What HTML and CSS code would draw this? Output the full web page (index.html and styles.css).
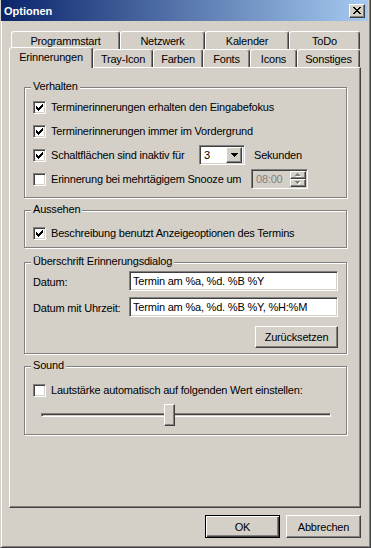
FILE: index.html
```html
<!doctype html>
<html lang="de">
<head>
  <meta charset="UTF-8">
  <title>Optionen</title>
  <link rel="stylesheet" href="styles.css">
</head>
<body>
  <div class="window">
    <div class="titlebar">
      <span class="title">Optionen</span>
      <span class="close-btn">
        <svg width="8" height="7" viewBox="0 0 8 7" shape-rendering="crispEdges">
          <path d="M0 0h2v1H0zM6 0h2v1H6zM1 1h2v1H1zM5 1h2v1H5zM2 2h4v1H2zM3 3h2v1H3zM2 4h4v1H2zM1 5h2v1H1zM5 5h2v1H5zM0 6h2v1H0zM6 6h2v1H6z"/>
        </svg>
      </span>
    </div>

    <div class="content">
      <div class="tabs">
        <div class="tab-row back">
          <div class="tab tab-programmstart">Programmstart</div>
          <div class="tab tab-netzwerk">Netzwerk</div>
          <div class="tab tab-kalender">Kalender</div>
          <div class="tab tab-todo">ToDo</div>
        </div>
        <div class="tab-row front">
          <div class="tab tab-erinnerungen active">Erinnerungen</div>
          <div class="tab tab-tray">Tray-Icon</div>
          <div class="tab tab-farben">Farben</div>
          <div class="tab tab-fonts">Fonts</div>
          <div class="tab tab-icons">Icons</div>
          <div class="tab tab-sonstiges">Sonstiges</div>
        </div>
      </div>

      <div class="panel">
        <div class="group group-verhalten">
          <span class="group-title">Verhalten</span>
          <div class="row">
            <span class="checkbox checked">
              <svg width="7" height="7" viewBox="0 0 7 7" shape-rendering="crispEdges"><path d="M0 2h1v3H0zM1 3h1v3H1zM2 4h1v3H2zM3 3h1v3H3zM4 2h1v3H4zM5 1h1v3H5zM6 0h1v3H6z"/></svg>
            </span>
            <span>Terminerinnerungen erhalten den Eingabefokus</span>
          </div>
          <div class="row">
            <span class="checkbox checked">
              <svg width="7" height="7" viewBox="0 0 7 7" shape-rendering="crispEdges"><path d="M0 2h1v3H0zM1 3h1v3H1zM2 4h1v3H2zM3 3h1v3H3zM4 2h1v3H4zM5 1h1v3H5zM6 0h1v3H6z"/></svg>
            </span>
            <span>Terminerinnerungen immer im Vordergrund</span>
          </div>
          <div class="row">
            <span class="checkbox checked">
              <svg width="7" height="7" viewBox="0 0 7 7" shape-rendering="crispEdges"><path d="M0 2h1v3H0zM1 3h1v3H1zM2 4h1v3H2zM3 3h1v3H3zM4 2h1v3H4zM5 1h1v3H5zM6 0h1v3H6z"/></svg>
            </span>
            <span class="label-combo">Schaltflächen sind inaktiv für</span>
            <span class="combo">
              <span class="combo-text">3</span>
              <span class="combo-btn">
                <svg width="7" height="4" viewBox="0 0 7 4" shape-rendering="crispEdges"><path d="M0 0h7v1H0zM1 1h5v1H1zM2 2h3v1H2zM3 3h1v1H3z"/></svg>
              </span>
            </span>
            <span class="unit">Sekunden</span>
          </div>
          <div class="row">
            <span class="checkbox"></span>
            <span class="label-spin">Erinnerung bei mehrtägigem Snooze um</span>
            <span class="spin disabled">
              <span class="spin-text">08:00</span>
              <span class="spin-btns">
                <span class="spin-btn">
                  <svg width="6" height="4" viewBox="0 0 6 4" shape-rendering="crispEdges"><path class="hl" d="M3 1h1v1H3zM2 2h3v1H2zM1 3h5v1H1z"/><path d="M2 0h1v1H2zM1 1h3v1H1zM0 2h5v1H0z"/></svg>
                </span>
                <span class="spin-btn">
                  <svg width="6" height="4" viewBox="0 0 6 4" shape-rendering="crispEdges"><path class="hl" d="M1 1h5v1H1zM2 2h3v1H2zM3 3h1v1H3z"/><path d="M0 0h5v1H0zM1 1h3v1H1zM2 2h1v1H2z"/></svg>
                </span>
              </span>
            </span>
          </div>
        </div>

        <div class="group group-aussehen">
          <span class="group-title">Aussehen</span>
          <div class="row">
            <span class="checkbox checked">
              <svg width="7" height="7" viewBox="0 0 7 7" shape-rendering="crispEdges"><path d="M0 2h1v3H0zM1 3h1v3H1zM2 4h1v3H2zM3 3h1v3H3zM4 2h1v3H4zM5 1h1v3H5zM6 0h1v3H6z"/></svg>
            </span>
            <span>Beschreibung benutzt Anzeigeoptionen des Termins</span>
          </div>
        </div>

        <div class="group group-ueberschrift">
          <span class="group-title">Überschrift Erinnerungsdialog</span>
          <div class="field">
            <span class="field-label">Datum:</span>
            <span class="edit">Termin am %a, %d. %B %Y</span>
          </div>
          <div class="field">
            <span class="field-label">Datum mit Uhrzeit:</span>
            <span class="edit">Termin am %a, %d. %B %Y, %H:%M</span>
          </div>
          <div class="field-actions">
            <span class="button btn-reset">Zurücksetzen</span>
          </div>
        </div>

        <div class="group group-sound">
          <span class="group-title">Sound</span>
          <div class="row">
            <span class="checkbox"></span>
            <span>Lautstärke automatisch auf folgenden Wert einstellen:</span>
          </div>
          <div class="slider">
            <span class="slider-track"></span>
            <span class="slider-thumb" style="--value: 0.44"></span>
          </div>
        </div>
      </div>

      <div class="buttons">
        <span class="button default">OK</span>
        <span class="button">Abbrechen</span>
      </div>
    </div>
  </div>
</body>
</html>
```

FILE: styles.css
```css
* {
    box-sizing: border-box;
}
body {
    margin: 0;
    background: #d4d0c8;
    font-family: "Liberation Sans", Arial, sans-serif;
    font-size: 11px;
    letter-spacing: -0.2px;
    color: #000;
}
.window {
    width: 371px;
    height: 548px;
    background: #d4d0c8;
    border-right: 1px solid #404040;
    border-bottom: 1px solid #404040;
    border-left: 1px solid #d4d0c8;
    box-shadow: inset 1px 0 #fff, inset -1px -1px #808080;
    display: flex;
    flex-direction: column;
}

/* title bar */
.titlebar {
    height: 21px;
    margin-right: 2px;
    padding: 0 3px 0 3px;
    background: linear-gradient(to right, #0a246a, #a6caf0);
    display: flex;
    align-items: center;
}
.title {
    flex: 1;
    color: #fff;
    font-weight: bold;
    font-size: 11px;
    letter-spacing: 0;
    padding-top: 1px;
}
.close-btn {
    width: 16px;
    height: 14px;
    background: #d4d0c8;
    border: 1px solid;
    border-color: #fff #404040 #404040 #fff;
    box-shadow: inset -1px -1px #808080;
    display: flex;
    align-items: center;
    justify-content: center;
    padding-bottom: 1px;
}

.content {
    padding: 10px 9px 0 8px;
}

/* tabs */
.tab-row {
    display: flex;
    height: 18px;
}
.tab-row.back {
    margin-left: 2px;
}
.tab {
    height: 18px;
    border: 1px solid;
    border-bottom: 0;
    border-color: #fff #404040 #fff #fff;
    border-radius: 3px 3px 0 0;
    box-shadow: inset -1px 0 #808080;
    background: #d4d0c8;
    text-align: center;
    line-height: 13px;
    padding-top: 3px;
}
.tab.active {
    position: relative;
    z-index: 1;
    height: 21px;
    margin-top: -2px;
    padding-top: 3px;
}
.tab-programmstart { width: 109px; }
.tab-netzwerk { width: 85px; }
.tab-kalender { width: 84px; }
.tab-todo { width: 71px; }
.tab-erinnerungen { width: 84px; }
.tab-tray { width: 60px; }
.tab-farben { width: 50px; }
.tab-fonts { width: 47px; }
.tab-icons { width: 47px; }
.tab-sonstiges { width: 63px; }

.panel {
    height: 441px;
    border: 1px solid;
    border-color: #fff #404040 #404040 #fff;
    box-shadow: inset -1px -1px #808080;
    padding: 0 13px 0 14px;
}

/* group boxes */
.group {
    position: relative;
    border: 1px solid #808080;
    box-shadow: inset 1px 1px #fff, 1px 1px #fff;
    padding: 0 8px;
}
.group-title {
    position: absolute;
    top: -8px;
    left: 6px;
    padding: 0 2px;
    line-height: 13px;
    background: #d4d0c8;
}
.group-verhalten {
    margin-top: 19px;
    padding-top: 7px;
    padding-bottom: 6px;
}
.group-aussehen {
    margin-top: 12px;
    padding-top: 10px;
    padding-bottom: 2px;
}
.group-ueberschrift {
    margin-top: 14px;
    padding-top: 8px;
    padding-bottom: 5px;
}
.group-sound {
    margin-top: 12px;
    padding-top: 11px;
    padding-bottom: 8px;
}

.row {
    display: flex;
    align-items: center;
    height: 24px;
}
.checkbox {
    width: 13px;
    height: 13px;
    margin-right: 5px;
    flex: none;
    background: #fff;
    border: 1px solid;
    border-color: #808080 #fff #fff #808080;
    box-shadow: inset 1px 1px #404040, inset -1px -1px #d4d0c8;
    padding: 2px;
    display: flex;
}
.checkbox svg {
    display: block;
}

.label-combo {
    width: 148px;
}
.combo {
    width: 46px;
    height: 20px;
    background: #fff;
    border: 1px solid;
    border-color: #808080 #fff #fff #808080;
    box-shadow: inset 1px 1px #404040, inset -1px -1px #d4d0c8;
    padding: 2px;
    display: flex;
    align-items: center;
}
.combo-text {
    flex: 1;
    padding-left: 2px;
}
.combo-btn {
    width: 16px;
    height: 16px;
    background: #d4d0c8;
    border: 1px solid;
    border-color: #fff #404040 #404040 #fff;
    box-shadow: inset -1px -1px #808080;
    display: flex;
    align-items: center;
    justify-content: center;
}
.unit {
    margin-left: 9px;
}

.label-spin {
    width: 200px;
}
.spin {
    width: 57px;
    height: 20px;
    border: 1px solid;
    border-color: #808080 #fff #fff #808080;
    box-shadow: inset 1px 1px #404040, inset -1px -1px #d4d0c8;
    padding: 2px 1px 2px 2px;
    display: flex;
    align-items: center;
}
.spin-text {
    flex: 1;
    color: #808080;
    padding-left: 2px;
}
.spin-btns {
    display: flex;
    flex-direction: column;
    width: 16px;
    height: 16px;
}
.spin-btn {
    flex: 1;
    border: 1px solid;
    border-color: #fff #404040 #404040 #fff;
    box-shadow: inset -1px -1px #808080;
    display: flex;
    align-items: center;
    justify-content: center;
}
.spin-btn svg path {
    fill: #808080;
}
.spin-btn svg path.hl {
    fill: #fff;
}

/* text fields */
.field {
    display: flex;
    align-items: center;
    height: 20px;
    margin-bottom: 6px;
}
.field-label {
    width: 96px;
    padding-top: 2px;
}
.edit {
    width: 209px;
    height: 20px;
    background: #fff;
    border: 1px solid;
    border-color: #808080 #fff #fff #808080;
    box-shadow: inset 1px 1px #404040, inset -1px -1px #d4d0c8;
    padding: 3px 3px 0;
    line-height: 13px;
    white-space: nowrap;
}
.field-actions {
    display: flex;
    justify-content: flex-end;
    margin-top: 9px;
}

/* buttons */
.button {
    display: flex;
    align-items: center;
    justify-content: center;
    height: 23px;
    width: 75px;
    border: 1px solid;
    border-color: #fff #404040 #404040 #fff;
    box-shadow: inset -1px -1px #808080;
    background: #d4d0c8;
}
.button.default {
    border: 1px solid #000;
    box-shadow: inset 1px 1px #fff, inset -1px -1px #404040, inset -2px -2px #808080;
}
.btn-reset {
    width: 83px;
    height: 22px;
}
.buttons {
    display: flex;
    justify-content: flex-end;
    gap: 6px;
    margin-top: 7px;
}

/* slider */
.slider {
    position: relative;
    height: 22px;
    margin: 2px 7px 0 8px;
    display: flex;
    align-items: center;
}
.slider-track {
    flex: 1;
    height: 4px;
    border: 1px solid;
    border-color: #808080 #fff #fff #808080;
    box-shadow: inset 1px 1px #404040, inset -1px -1px #d4d0c8;
}
.slider-thumb {
    position: absolute;
    top: 0;
    left: calc((100% - 11px) * var(--value));
    width: 11px;
    height: 22px;
    background: #d4d0c8;
    border: 1px solid;
    border-color: #fff #404040 #404040 #fff;
    box-shadow: inset -1px -1px #808080;
}
```
